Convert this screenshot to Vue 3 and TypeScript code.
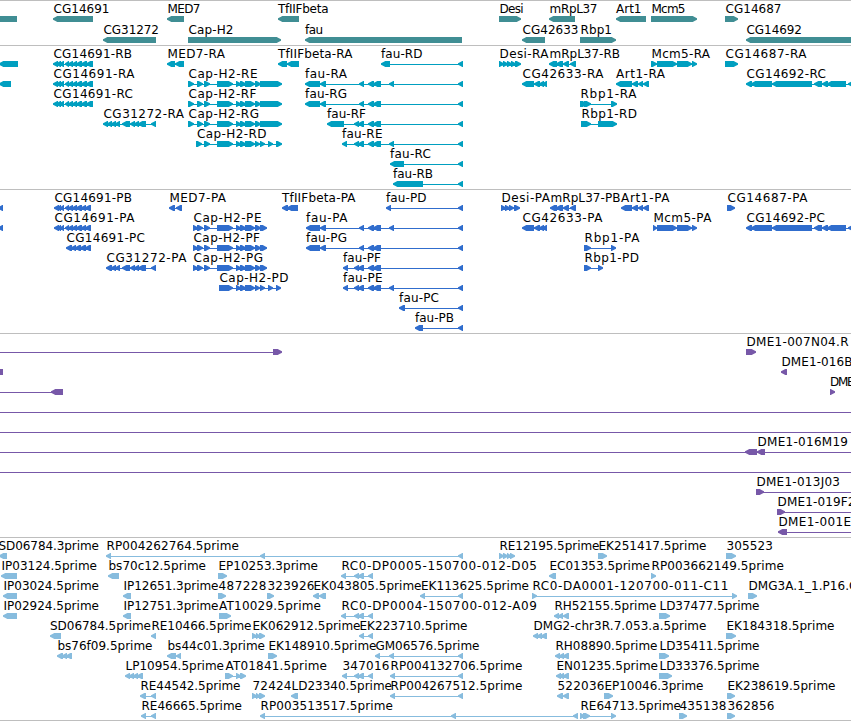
<template>
  <main class="browser">
    <section
      v-for="track in tracks"
      :key="track.name"
      class="track"
      :class="track.name"
    >
      <svg class="canvas" width="851" :height="track.height">
        <g
          v-for="(feature, i) in track.features"
          :key="i"
          :transform="`translate(0 ${feature.row * track.pitch})`"
        >
          <rect
            v-if="feature.line"
            class="glyph"
            :x="feature.line[0]"
            y="18"
            :width="feature.line[1] - feature.line[0]"
            height="1"
          />
          <path class="glyph" :d="feature.path" />
          <text
            v-if="feature.label"
            class="label"
            :x="feature.from"
            y="12"
            :textLength="feature.to - feature.from + 0.5"
          >
            {{ feature.label }}
          </text>
        </g>
      </svg>
    </section>
  </main>
</template>

<script setup lang="ts">
type Strand = "L" | "R";

interface Feature {
  row: number;
  label: string;
  from: number;
  to: number;
  path: string;
  line: number[] | null;
}

interface Track {
  name: string;
  height: number;
  pitch: number;
  features: Feature[];
}

// one exon: a 6px bar that tapers to a blunt tip on the strand side
const exon = (a: number, b: number, strand: Strand) => {
  const tip = Math.min(5, b - a);
  const [tail, head, dir] = strand === "L" ? [b, a, 1] : [a, b, -1];
  const mid = head + dir * tip * 0.5;
  const neck = head + dir * tip * 0.85;
  return `M${tail} 15V21H${neck}L${mid} 20L${head} 18.7V17.3L${mid} 16L${neck} 15Z`;
};

// "row strand label from to | start,end start,end ..."
const parse = (source: string): Feature[] =>
  source
    .trim()
    .split("\n")
    .map((entry) => {
      const [head, tail] = entry.split("|");
      const [row, strand, label, from, to] = head.trim().split(" ");
      const parts = tail
        .trim()
        .split(" ")
        .map((part) => part.split(",").map(Number));
      return {
        row: Number(row),
        label: label === "_" ? "" : label,
        from: Number(from),
        to: Number(to),
        path: parts.map(([a, b]) => exon(a, b, strand as Strand)).join(""),
        line:
          parts.length > 1
            ? [parts[0][0] + 1, parts[parts.length - 1][1] - 1]
            : null,
      };
    });

const genes = `
0 L _ 0 0 | -10,17
0 L CG14691 53.5 109 | 53,93
0 L MED7 167.5 200 | 167,184
0 L TfIIFbeta 278 328 | 278,299
0 R Desi 499.5 523 | 499,521
0 L mRpL37 549.5 597 | 549,575
0 L Art1 616 641 | 616,646
0 R Mcm5 651.5 685 | 651,697
0 R CG14687 725.5 781 | 725,738
1 L CG31272 103.5 158.5 | 103,156
1 R Cap-H2 188.5 233 | 188,281
1 L fau 305 322.5 | 305,462
1 L CG42633 522.5 578 | 522,545
1 R Rbp1 580.5 611.5 | 580,616
1 L CG14692 746.5 801.5 | 746,860`;

const transcripts = `
0 L _ 0 0 | -1,18
0 L CG14691-RB 53.5 131.5 | 53,58 56,61 59,64 65,69 68,73 72,77 76,82 81,87 86,93
0 L MED7-RA 167.5 224.5 | 167,175 175,184
0 L TfIIFbeta-RA 278 352 | 278,287 287,299
0 L fau-RD 381 422 | 381,390 458,463
0 R Desi-RA 499.5 548 | 499,504 503,508 507,512 511,516 515,521
0 L mRpL37-RB 549.5 619.5 | 549,557 556,563 563,569 570,576
0 R Mcm5-RA 651.5 709.5 | 651,657 657,677 677,692 692,697
0 R CG14687-RA 725.5 806 | 725,738
1 L _ 0 0 | -1,11
1 L CG14691-RA 53.5 134 | 53,58 56,61 59,64 65,69 68,73 72,77 76,82 81,87 86,93
1 R Cap-H2-RE 188.5 257 | 188,194 197,203 204,210 217,233 236,241 240,246 245,255 255,261 260,282
1 L fau-RA 305 346.5 | 305,320 320,326 359,364 368,374 373,381 389,394 458,463
1 L CG42633-RA 522.5 603 | 522,534 534,540 539,544 542,547
1 L Art1-RA 616 664.5 | 616,632 632,638 638,643 643,649
1 L CG14692-RC 746.5 825.5 | 746,752 751,772 772,812 814,822 822,828 827,846 848,865
2 L CG14691-RC 53.5 132.5 | 53,58 56,61 59,64 65,69 68,73 72,77 76,82 81,87 86,93
2 R Cap-H2-RF 188.5 256 | 188,194 197,203 204,210 217,233 236,241 240,246 245,255 255,261 260,282
2 L fau-RG 305 346.5 | 305,320 320,326 359,364 368,374 373,381 458,463
2 R Rbp1-RA 580.5 636 | 580,587 584,591 611,617
3 L CG31272-RA 103.5 183.5 | 103,108 107,112 111,116 115,120 122,130 130,135 134,139 138,146 151,156
3 R Cap-H2-RG 188.5 258.5 | 188,194 197,203 204,210 217,233 236,241 240,246 245,255 255,261 260,282
3 L fau-RF 327 365.5 | 327,344 354,359 358,364 368,374 373,381 458,463
3 R Rbp1-RD 581.5 636.5 | 581,591 598,617
4 R Cap-H2-RD 197 266 | 196,202 204,210 217,233 236,241 240,246 245,255 255,260 260,265 268,273 276,282
4 L fau-RE 342 382 | 342,347 354,359 358,364 368,374 373,381 389,394 458,463
5 L fau-RC 390 430.5 | 390,404 458,463
6 L fau-RB 393 432.5 | 393,423 458,463`;

const proteins = `
0 L _ 0 0 | -2,3
0 L CG14691-PB 54.5 131.5 | 54,59 57,61 60,64 65,69 68,73 72,77 76,82 81,86 85,91
0 L MED7-PA 169.5 225.5 | 169,175 176,182
0 L TfIIFbeta-PA 282 355 | 282,288 287,298
0 L fau-PD 386 426 | 386,391 458,463
0 R Desi-PA 501.5 549.5 | 501,506 505,510 509,514 514,520
0 L mRpL37-PB 550.5 620 | 550,557 556,563 563,569 570,576
0 L Art1-PA 621 669 | 621,632 632,638 638,643 643,649
0 R CG14687-PA 727.5 807 | 727,735
1 L _ 0 0 | -2,3
1 L CG14691-PA 54.5 134 | 54,59 57,61 60,64 65,69 68,73 72,77 76,82 81,86 85,91
1 R Cap-H2-PE 193.5 261 | 193,198 197,203 204,210 217,233 236,241 240,246 245,255 255,261 260,267
1 L fau-PA 306 347 | 306,320 320,326 359,364 368,374 373,381 389,394 458,463
1 L CG42633-PA 522.5 602 | 522,534 534,540 539,544 542,547
1 R Mcm5-PA 653.5 711 | 653,657 657,677 677,692 692,697
1 L CG14692-PC 746.5 824.5 | 746,752 751,772 772,812 814,822 822,828 827,846 848,865
2 L CG14691-PC 66.5 144.5 | 66,72 71,76 75,81 80,86 85,91
2 R Cap-H2-PF 193.5 259.5 | 193,198 197,203 204,210 217,233 236,241 240,246 245,255 255,261 260,267
2 L fau-PG 306 346.5 | 306,320 320,326 359,364 368,374 373,381 458,463
2 R Rbp1-PA 584.5 639 | 584,591 611,616
3 L CG31272-PA 106.5 186 | 106,112 111,116 115,120 122,130 130,135 134,139 138,146 151,156
3 R Cap-H2-PG 193.5 262.5 | 193,198 197,203 204,210 217,233 236,241 240,246 245,255 255,261 260,267
3 L fau-PF 343 380.5 | 343,348 354,359 358,364 368,374 373,381 458,463
3 R Rbp1-PD 584.5 638.5 | 584,591 598,603
4 R Cap-H2-PD 219.5 288 | 219,233 236,241 240,246 245,255 255,260 260,265 268,273 276,281
4 L fau-PE 343 382 | 343,348 354,359 358,364 368,374 373,381 389,394 458,463
5 L fau-PC 399 438.5 | 399,405 458,463
6 L fau-PB 415 453.5 | 415,423 458,463`;

const clones = `
0 R _ 0 0 | -20,-10 273,282
0 R DME1-007N04.R 746.5 848 | 746,756
1 L _ 0 0 | -9,3
1 L DME1-016B 781.5 852 | 781,787
2 L _ 0 0 | -20,-10 51,63
2 R DME 830 854 | 830,835
3 L _ 0 0 | -20,-10 870,880
4 L _ 0 0 | -20,-10 870,880
5 L _ 0 0 | -20,-10 870,880
5 L DME1-016M19 757.5 847.5 | 745,757 757,765
6 L _ 0 0 | -20,-10 870,880
7 R DME1-013J03 756.5 839.5 | 756,764 870,880
8 R DME1-019F2 777.5 855 | 777,785 870,880
9 L DME1-001E 778.5 850.5 | 778,787 870,880`;

const ests = `
0 L SD06784.3prime -1.5 98.5 | -1,7
0 L RP004262764.5prime 106.5 238.5 | 106,111 260,265 458,463
0 R RE12195.5prime 499.5 599 | 499,504 503,508 507,511 510,515
0 R EK251417.5prime 598.5 706 | 598,607
0 R 305523 726.5 772.5 | 726,736
1 L IP03124.5prime 1.5 96.5 | 1,17
1 L bs70c12.5prime 108.5 205.5 | 108,119
1 R EP10253.3prime 218.5 317.5 | 218,227
1 L RC0-DP0005-150700-012-D05 341.5 536.5 | 341,346 354,359 358,364 368,373
1 L EC01353.5prime 549.5 649.5 | 549,556
1 R RP003662149.5prime 651.5 783.5 | 651,656
2 L IP03024.5prime 3.5 98.5 | 3,17
2 L IP12651.3prime 123.5 218 | 123,131
2 R 487228 218.5 266 | 218,226
2 R 323926 267.5 314 | 267,274
2 L EK043805.5prime 313.5 421 | 313,319 319,326
2 L EK113625.5prime 421 528.5 | 420,425 458,463
2 R RC0-DA0001-120700-011-C11 532.5 728 | 532,537 732,737
2 R DMG3A.1_1.P16.C 748.5 857 | 748,757
3 L IP02924.5prime 3.5 98.5 | 3,17
3 L IP12751.3prime 123.5 218 | 123,131
3 R AT10029.5prime 219 320.5 | 219,231
3 L RC0-DP0004-150700-012-A09 341.5 536.5 | 341,346 354,359 358,364 368,373
3 L RH52155.5prime 554.5 656 | 554,559 558,563 563,569
3 R LD37477.5prime 659.5 759 | 659,670
4 L SD06784.5prime 50 150.5 | 50,61
4 L RE10466.5prime 151.5 251 | 151,156
4 R EK062912.5prime 252.5 360 | 252,257 256,260 259,265
4 L EK223710.5prime 359.5 467 | 359,364 368,373
4 L DMG2-chr3R.7.053.a.5prime 533.5 706 | 533,538 537,542 541,547
4 R EK184318.5prime 726.5 834 | 726,736
5 L bs76f09.5prime 57.5 152 | 57,63 62,67 66,72
5 L bs44c01.3prime 167.5 264.5 | 167,176 176,181
5 R EK148910.5prime 268.5 376 | 268,277
5 L GM06576.5prime 375.5 479 | 375,380 389,394 458,463
5 L RH08890.5prime 555.5 657 | 555,560 559,564 563,569
5 R LD35411.5prime 659.5 759 | 659,669
6 L LP10954.5prime 125.5 223.5 | 125,130 129,134 133,138 137,143
6 R AT01841.5prime 225.5 326.5 | 225,233 236,241 240,246
6 L 347016 342.5 389 | 342,347 354,359 358,364 368,373
6 L RP004132706.5prime 390.5 522 | 390,395 458,463
6 L EN01235.5prime 556.5 657.5 | 556,561 559,564 563,569
6 R LD33376.5prime 659.5 759 | 659,672
7 L RE44542.5prime 140.5 240 | 140,146 151,156
7 R 72424 252.5 291 | 252,257 256,260 259,265
7 L LD23340.5prime 291.5 391.5 | 291,298
7 L RP004267512.5prime 390.5 522 | 390,395 458,463
7 L 522036 557.5 604 | 557,563 563,569
7 R EP10046.3prime 604.5 703 | 604,613
7 R EK238619.5prime 727.5 835 | 727,735
8 L RE46665.5prime 141.5 241.5 | 141,146 151,156
8 L RP003513517.5prime 260.5 392.5 | 260,265 451,456 573,578
8 R RE64713.5prime 580.5 680.5 | 580,585 583,590 611,616
8 R 435138 679.5 726 | 679,687
8 R 362856 727.5 774 | 727,735`;

const tracks: Track[] = [
  { name: "genes", height: 44, pitch: 21, features: parse(genes) },
  { name: "transcripts", height: 143, pitch: 20, features: parse(transcripts) },
  { name: "proteins", height: 143, pitch: 20, features: parse(proteins) },
  { name: "clones", height: 203, pitch: 20, features: parse(clones) },
  { name: "ests", height: 182, pitch: 20, features: parse(ests) },
];
</script>

<style>
body {
  margin: 0;
  background: #fff;
}
</style>

<style scoped>
.browser {
  display: flex;
  flex-direction: column;
  width: 851px;
  border-bottom: 1px solid #bebebe;
  overflow: hidden;
}

.track {
  border-top: 1px solid #bebebe;
}

.canvas {
  display: block;
  overflow: hidden;
}

.label {
  font: 12px "DejaVu Sans", sans-serif;
  fill: #000;
}

.genes {
  color: #408e94;
}

.transcripts {
  color: #009fc0;
}

.proteins {
  color: #306dcd;
}

.clones {
  color: #7758a8;
}

.ests {
  color: #87bcde;
}

.glyph {
  fill: currentColor;
}
</style>
